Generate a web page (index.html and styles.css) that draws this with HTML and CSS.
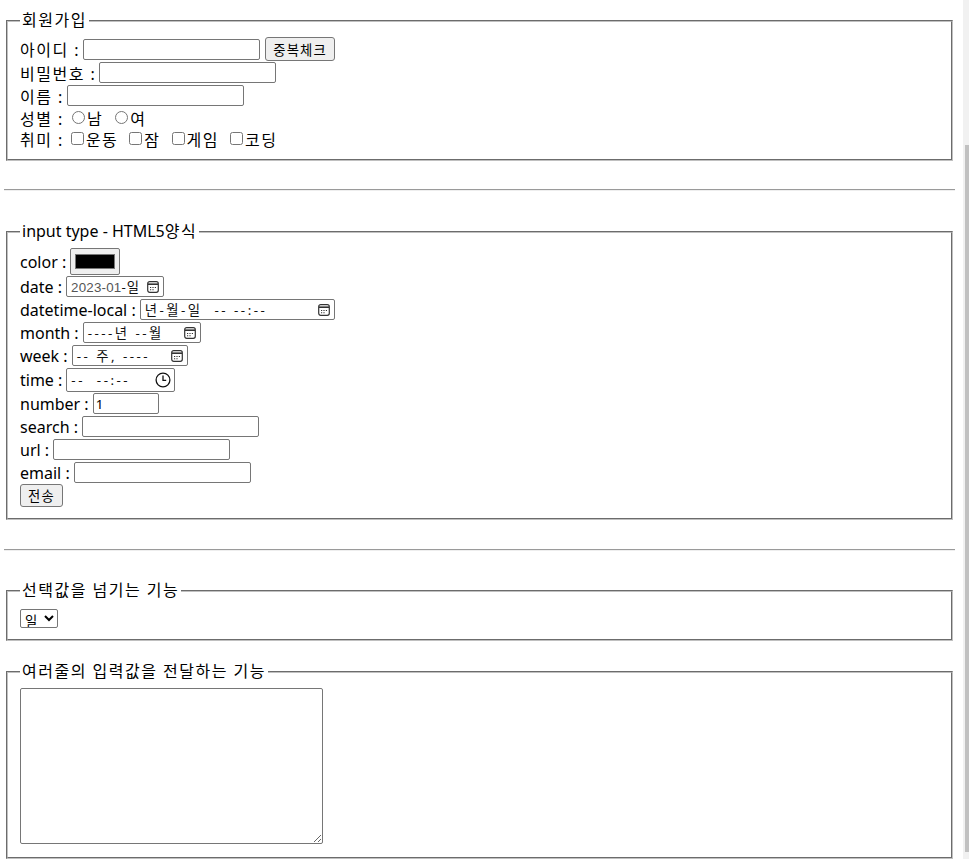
FILE: index.html
```html
<!DOCTYPE html>
<html lang="ko">
<head>
    <meta charset="UTF-8">
    <meta name="viewport" content="width=device-width, initial-scale=1.0">
    <title>폼 연습</title>
    <link rel="stylesheet" href="styles.css">
</head>
<body>

    <div class="page">
        <form action="#" method="get">
            <!-- 회원가입 -->
            <fieldset class="box box-join">
                <legend class="ko">회원가입</legend>
                <div class="row row-tall">
                    <span class="lbl ko">아이디 :</span>
                    <input type="text" name="id" class="txt">
                    <button type="button" class="btn btn-check">중복체크</button>
                </div>
                <div class="row">
                    <span class="lbl ko">비밀번호 :</span>
                    <input type="password" name="pw" class="txt">
                </div>
                <div class="row">
                    <span class="lbl ko">이름 :</span>
                    <input type="text" name="name" class="txt">
                </div>
                <div class="row row-text">
                    <span class="lbl ko">성별 :</span>
                    <label class="opt ko"><input type="radio" name="gender" value="m">남</label>
                    <label class="opt ko"><input type="radio" name="gender" value="f">여</label>
                </div>
                <div class="row row-text">
                    <span class="lbl ko">취미 :</span>
                    <label class="opt ko"><input type="checkbox" name="hobby" value="sport">운동</label>
                    <label class="opt ko"><input type="checkbox" name="hobby" value="sleep">잠</label>
                    <label class="opt ko"><input type="checkbox" name="hobby" value="game">게임</label>
                    <label class="opt ko"><input type="checkbox" name="hobby" value="code">코딩</label>
                </div>
            </fieldset>

            <hr>

            <!-- HTML5 input type -->
            <fieldset class="box box-types">
                <legend>input type - HTML5<span class="ko">양식</span></legend>
                <div class="row row-color">
                    <span class="lbl">color :</span>
                    <input type="color" name="color" value="#000000" class="color">
                </div>
                <div class="row">
                    <span class="lbl">date :</span>
                    <div class="fake fake-date"><span class="val"><span class="num-part">2023-01</span>-일</span>
                        <svg class="ico" width="12" height="12" viewBox="0 0 12 12"><rect x="0.7" y="0.7" width="10.6" height="10.6" rx="2" fill="none" stroke="#333" stroke-width="1.2"/><path d="M1 3.2h10" stroke="#333" stroke-width="1.6"/><path d="M3 6.5h1.2M5.4 6.5h1.2M7.8 6.5h1.2M3 8.7h1.2M5.4 8.7h1.2" stroke="#333" stroke-width="1.1"/></svg>
                    </div>
                </div>
                <div class="row">
                    <span class="lbl">datetime-local :</span>
                    <div class="fake fake-dt"><span class="val">년-월-일  -- --:--</span>
                        <svg class="ico" width="12" height="12" viewBox="0 0 12 12"><rect x="0.7" y="0.7" width="10.6" height="10.6" rx="2" fill="none" stroke="#333" stroke-width="1.2"/><path d="M1 3.2h10" stroke="#333" stroke-width="1.6"/><path d="M3 6.5h1.2M5.4 6.5h1.2M7.8 6.5h1.2M3 8.7h1.2M5.4 8.7h1.2" stroke="#333" stroke-width="1.1"/></svg>
                    </div>
                </div>
                <div class="row">
                    <span class="lbl">month :</span>
                    <div class="fake fake-month"><span class="val">----년 --월</span>
                        <svg class="ico" width="12" height="12" viewBox="0 0 12 12"><rect x="0.7" y="0.7" width="10.6" height="10.6" rx="2" fill="none" stroke="#333" stroke-width="1.2"/><path d="M1 3.2h10" stroke="#333" stroke-width="1.6"/><path d="M3 6.5h1.2M5.4 6.5h1.2M7.8 6.5h1.2M3 8.7h1.2M5.4 8.7h1.2" stroke="#333" stroke-width="1.1"/></svg>
                    </div>
                </div>
                <div class="row">
                    <span class="lbl">week :</span>
                    <div class="fake fake-week"><span class="val">-- 주, ----</span>
                        <svg class="ico" width="12" height="12" viewBox="0 0 12 12"><rect x="0.7" y="0.7" width="10.6" height="10.6" rx="2" fill="none" stroke="#333" stroke-width="1.2"/><path d="M1 3.2h10" stroke="#333" stroke-width="1.6"/><path d="M3 6.5h1.2M5.4 6.5h1.2M7.8 6.5h1.2M3 8.7h1.2M5.4 8.7h1.2" stroke="#333" stroke-width="1.1"/></svg>
                    </div>
                </div>
                <div class="row row-time">
                    <span class="lbl">time :</span>
                    <div class="fake fake-time"><span class="val">--  --:--</span>
                        <svg class="ico-clock" width="16" height="16" viewBox="0 0 16 16"><circle cx="8" cy="8" r="6.9" fill="none" stroke="#111" stroke-width="1.3"/><path d="M8 3.6V8.4h3.2" fill="none" stroke="#111" stroke-width="1.3"/></svg>
                    </div>
                </div>
                <div class="row">
                    <span class="lbl">number :</span>
                    <input type="number" name="num" value="1" class="txt num">
                </div>
                <div class="row">
                    <span class="lbl">search :</span>
                    <input type="search" name="q" class="txt">
                </div>
                <div class="row">
                    <span class="lbl">url :</span>
                    <input type="url" name="url" class="txt">
                </div>
                <div class="row">
                    <span class="lbl">email :</span>
                    <input type="email" name="email" class="txt">
                </div>
                <div class="row row-tall">
                    <button type="submit" class="btn btn-send">전송</button>
                </div>
            </fieldset>

            <hr class="hr-second">

            <!-- select -->
            <fieldset class="box box-select">
                <legend class="ko">선택값을 넘기는 기능</legend>
                <div class="row">
                    <select name="day" class="sel">
                        <option>일</option>
                        <option>월</option>
                        <option>화</option>
                    </select>
                </div>
            </fieldset>

            <!-- textarea -->
            <fieldset class="box box-memo">
                <legend class="ko">여러줄의 입력값을 전달하는 기능</legend>
                <textarea name="memo" class="memo"></textarea>
            </fieldset>
        </form>
    </div>

    <!-- barre de défilement -->
    <div class="scrollbar"><div class="thumb"></div></div>

</body>
</html>
```

FILE: styles.css
```css
html {
    overflow: hidden;
}

body {
    margin: 0;
    font-family: "Noto Sans", "Noto Sans CJK KR", sans-serif;
    font-size: 16px;
    color: #000;
    background-color: #fff;
}

/* Hangul plus large, comme Malgun Gothic */
.ko {
    letter-spacing: 1.5px;
}

.page {
    width: 951px;
    margin-left: 4px;
    padding-top: 10px;
}

/* Cadres */
.box {
    margin: 0 2px;
    padding: 6px 12px 10px;
    border: 2px groove rgb(192, 192, 192);
    min-width: 0;
}

.box legend {
    padding: 0 2px;
    height: 21px;
    line-height: 21px;
}

.box-select {
    padding-bottom: 9px;
}

.box-memo {
    margin-top: 20px;
    padding-bottom: 13px;
}

hr {
    margin: 28px 0 30px;
    height: 0;
    border: 0;
    border-top: 1px solid #9a9a9a;
    border-bottom: 1px solid #eeeeee;
}

.hr-second {
    margin-top: 29px;
    margin-bottom: 29px;
}

/* Lignes */
.row {
    display: flex;
    align-items: center;
    height: 23px;
}

.row-tall {
    height: 24px;
}

.row-text {
    height: 21px;
}

.row-color {
    height: 27px;
}

.row-time {
    height: 25px;
}

.lbl {
    margin-right: 4px;
    white-space: pre;
}

.lbl.ko {
    margin-right: 3px;
}

.opt {
    display: flex;
    align-items: center;
    margin-right: 7px;
}

.opt input[type="radio"] {
    width: 13px;
    height: 13px;
    margin: 0 2px 0 5px;
}

.opt input[type="checkbox"] {
    width: 13px;
    height: 13px;
    margin: 0 2px 0 4px;
}

/* Champs */
.txt {
    width: 177px;
    height: 21px;
    box-sizing: border-box;
    margin: 0;
    padding: 1px 2px;
    border: 1px solid #767676;
    border-radius: 2px;
    font: 13.33px "Noto Sans", "Noto Sans CJK KR", sans-serif;
    background-color: #fff;
}

.num {
    width: 66px;
}

.btn {
    box-sizing: border-box;
    margin: 0;
    padding: 0 4px;
    border: 1px solid #767676;
    border-radius: 3px;
    background-color: #efefef;
    font: 13.33px "Noto Sans CJK KR", sans-serif;
    letter-spacing: 1.2px;
    color: #000;
    cursor: pointer;
}

.btn-check {
    width: 70px;
    height: 24px;
    margin-left: 5px;
}

.btn-send {
    width: 43px;
    height: 23px;
    align-self: flex-start;
}

.color {
    width: 50px;
    height: 27px;
    box-sizing: border-box;
    margin: 0;
    padding: 1px 2px;
    border: 1px solid #767676;
    border-radius: 2px;
    background-color: #efefef;
}

/* Champs date / heure */
.fake {
    display: flex;
    align-items: center;
    justify-content: space-between;
    height: 21px;
    box-sizing: border-box;
    padding: 0 4px;
    border: 1px solid #767676;
    border-radius: 2px;
    font-family: "Noto Sans", "Noto Sans CJK KR", sans-serif;
    font-size: 13.33px;
    color: #111;
}

.fake .val {
    white-space: pre;
    letter-spacing: 2.5px;
}

.fake-date .val {
    letter-spacing: 1px;
}

.fake-date .num-part {
    font-family: "Liberation Sans", sans-serif;
    color: #555;
    letter-spacing: 0.2px;
}

.fake-dt {
    width: 195px;
}

.fake-date {
    width: 98px;
}

.fake-month {
    width: 118px;
}

.fake-week {
    width: 116px;
}

.fake-time {
    width: 109px;
    height: 24px;
    padding-right: 3px;
    align-self: flex-end;
}

.ico,
.ico-clock {
    flex-shrink: 0;
}

.sel {
    width: 38px;
    height: 19px;
    margin: 0;
    font: 13.33px "Noto Sans CJK KR", sans-serif;
    border: 1px solid #767676;
    border-radius: 2px;
    background-color: #fff;
}

.memo {
    display: block;
    width: 303px;
    height: 156px;
    box-sizing: border-box;
    margin: 0;
    border: 1px solid #767676;
    border-radius: 2px;
    resize: both;
}

/* Barre de défilement */
.scrollbar {
    position: fixed;
    top: 0;
    right: 0;
    width: 6px;
    height: 100%;
    background-color: #f1f1f1;
}

.scrollbar .thumb {
    position: absolute;
    top: 145px;
    left: 2px;
    right: 0;
    height: 707px;
    background-color: #c1c1c1;
}
```
